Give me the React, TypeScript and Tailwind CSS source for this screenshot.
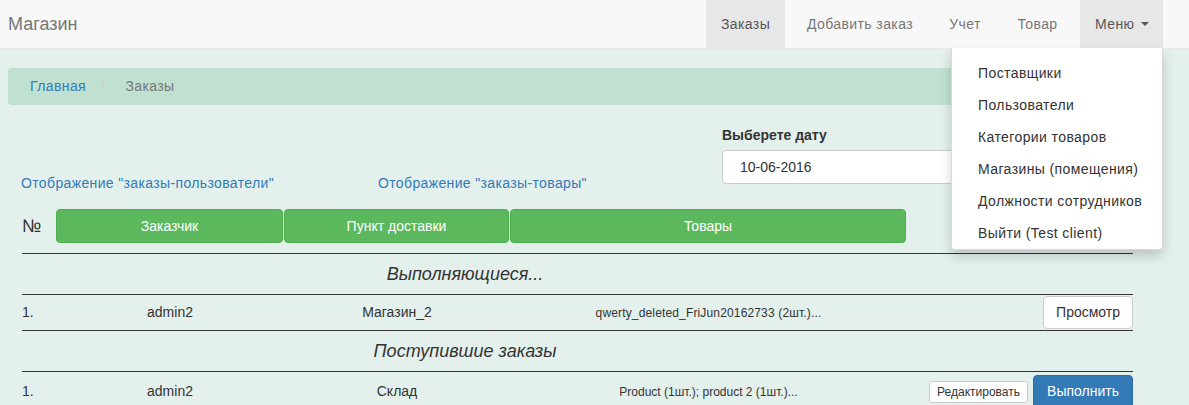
import React from 'react';

const navItems = [
  { label: 'Заказы', w: 'w-[79px]', active: true },
  { label: 'Добавить заказ', w: 'w-[150px]', active: false },
  { label: 'Учет', w: 'w-[60px]', active: false },
  { label: 'Товар', w: 'w-[85px]', active: false },
];

const menuItems = [
  'Поставщики',
  'Пользователи',
  'Категории товаров',
  'Магазины (помещения)',
  'Должности сотрудников',
  'Выйти (Test client)',
];

const cols = 'grid grid-cols-[34px_228px_226px_397px_226px]';

export default function App() {
  return (
    <div className="w-[1189px] h-[405px] overflow-hidden bg-[#e3f0ec] font-['Liberation_Sans',Arial,sans-serif] text-[14px] text-[#333]">
      {/* navbar */}
      <div className="h-[49px] bg-[#f8f8f8] border-b border-[#e7e7e7] flex justify-between pr-[26px]">
        <div className="pl-[8px] flex items-center text-[18px] text-[#777]">Магазин</div>
        <div className="flex h-[48px] tracking-[0.4px]">
          {navItems.map((item) => (
            <div
              key={item.label}
              className={`${item.w} flex items-center justify-center ${item.active ? 'bg-[#e7e7e7] text-[#555]' : 'text-[#777]'}`}
            >
              {item.label}
            </div>
          ))}
          <div className="relative w-[83px] flex items-center pl-[15px] bg-[#e7e7e7] text-[#555]">
            Меню
            <span className="ml-[7px] w-0 h-0 border-x-[4px] border-x-transparent border-t-[4px] border-t-[#555]" />
            <div className="absolute right-0 top-full w-[212px] bg-white border border-t-0 border-[rgba(0,0,0,0.15)] rounded-b-[4px] shadow-[0_6px_12px_rgba(0,0,0,0.175)] pt-[9px] z-10">
              {menuItems.map((m) => (
                <div key={m} className="h-[32px] flex items-center px-[26px] whitespace-nowrap text-[#333]">
                  {m}
                </div>
              ))}
            </div>
          </div>
        </div>
      </div>

      {/* breadcrumb */}
      <div className="ml-[8px] mt-[19px] w-[1140px] h-[37px] rounded-[4px] bg-[#c0e1d2] flex items-center pl-[22px] tracking-[0.4px]">
        <span className="text-[#337ab7]">Главная</span>
        <span className="ml-[15px] mr-[20px] text-[#ccc]">/</span>
        <span className="text-[#777]">Заказы</span>
      </div>

      <div className="ml-[22px] w-[1111px]">
        {/* filters */}
        <div className="mt-[20px] flex h-[68px]">
          <div className="w-[701px] flex items-end -ml-[1px] tracking-[0.36px]">
            <a className="w-[357px] leading-[20px] text-[#337ab7]">Отображение "заказы-пользователи"</a>
            <a className="leading-[20px] text-[#337ab7]">Отображение "заказы-товары"</a>
          </div>
          <div>
            <div className="font-bold leading-[20px]">Выберете дату</div>
            <div className="mt-[5px] w-[300px] h-[34px] bg-white border border-[#ccc] rounded-[4px] flex items-center pl-[17px] text-[#333]">
              10-06-2016
            </div>
          </div>
        </div>

        {/* header */}
        <div className={`${cols} mt-[16px] h-[34px] items-center`}>
          <div className="text-[18px]">№</div>
          <div className="w-[227px] h-[34px] bg-[#5cb85c] border border-[#4cae4c] rounded-[4px] text-white flex items-center justify-center">Заказчик</div>
          <div className="w-[225px] h-[34px] bg-[#5cb85c] border border-[#4cae4c] rounded-[4px] text-white flex items-center justify-center">Пункт доставки</div>
          <div className="w-[396px] h-[34px] bg-[#5cb85c] border border-[#4cae4c] rounded-[4px] text-white flex items-center justify-center">Товары</div>
          <div />
        </div>

        <div className="mt-[10px] border-t border-[#333] h-[41px] flex items-center">
          <div className="w-[886px] text-center italic text-[18px]">Выполняющиеся...</div>
        </div>

        <div className={`${cols} border-t border-[#333] h-[36px] items-center`}>
          <div>1.</div>
          <div className="text-center">admin2</div>
          <div className="text-center">Магазин_2</div>
          <div className="text-center text-[12px] tracking-[0.15px]">qwerty_deleted_FriJun20162733 (2шт.)...</div>
          <div className="flex justify-end">
            <button className="h-[33px] px-[12px] bg-white border border-[#ccc] rounded-[4px] text-[#333]">Просмотр</button>
          </div>
        </div>

        <div className="border-t border-[#333] h-[41px] flex items-center">
          <div className="w-[886px] text-center italic text-[18px]">Поступившие заказы</div>
        </div>

        <div className={`${cols} border-t border-[#333] h-[40px] items-center`}>
          <div>1.</div>
          <div className="text-center">admin2</div>
          <div className="text-center">Склад</div>
          <div className="text-center text-[12px]">Product (1шт.); product 2 (1шт.)...</div>
          <div className="flex justify-end items-center gap-[5px]">
            <button className="h-[22px] px-[7px] bg-white border border-[#ccc] rounded-[3px] text-[12px] text-[#333]">Редактировать</button>
            <button className="h-[34px] w-[100px] bg-[#337ab7] border border-[#2e6da4] rounded-[4px] text-white">Выполнить</button>
          </div>
        </div>
      </div>
    </div>
  );
}
